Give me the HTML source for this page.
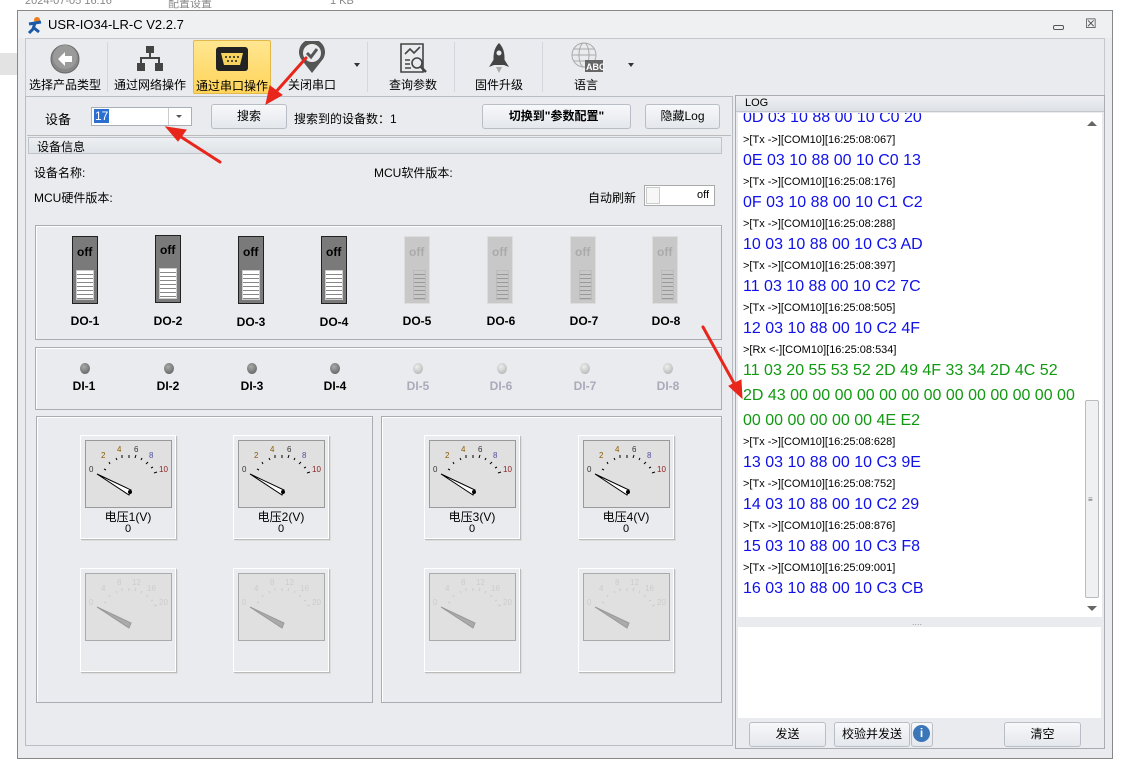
<!DOCTYPE html>
<html><head><meta charset="utf-8"><style>
*{margin:0;padding:0;box-sizing:border-box}
body{width:1121px;height:776px;background:#fff;position:relative;overflow:hidden;font-family:"Liberation Sans","Noto Sans CJK SC",sans-serif;font-size:12px;color:#000}
.a{position:absolute}
.btn{position:absolute;background:linear-gradient(#f7f8fa,#e4e7ec);border:1px solid #b9bec6;border-radius:3px;text-align:center;font-size:12px}
.tb{position:absolute;top:40px;height:54px;text-align:center;font-size:12px}
.tb span{position:absolute;left:0;right:0;top:36px}
.sep{position:absolute;top:42px;width:1px;height:50px;background:#d4d8de}
.sw{position:absolute;top:236px;width:26px;height:68px;background:#7a7a7a;border:1px solid #222}
.sw b{position:absolute;left:4px;top:8px;font-size:12px;font-weight:bold;color:#000;font-family:"Liberation Sans Narrow","Liberation Sans",sans-serif}
.sw i{position:absolute;left:3px;right:3px;top:33px;bottom:3px;background:repeating-linear-gradient(#fff 0 3px,#888 3px 4px);border:1px solid #ccc}
.sw.d{background:#c8c8c8;border-color:#ddd}
.sw.d b{color:#aaa}
.sw.d i{background:repeating-linear-gradient(#c8c8c8 0 3px,#999 3px 4px);border-color:#bbb;left:8px}
.lb{position:absolute;font-weight:bold;font-size:12px;width:40px;text-align:center;font-family:"Liberation Sans Narrow","Liberation Sans",sans-serif}
.led{position:absolute;top:363px;width:10px;height:11px;border-radius:50%;background:radial-gradient(circle at 40% 35%,#aaa,#555)}
.led.d{background:radial-gradient(circle at 40% 35%,#eee,#aaa)}
.card{position:absolute;width:96px;height:104px;background:#e9ebee;border:1px solid #fff;box-shadow:1px 1px 0 #bbb,2px 2px 0 #ddd}
.card svg{position:absolute;left:4px;top:4px}
.card .t{position:absolute;left:0;right:0;top:72px;text-align:center;font-size:12px}
.card .v{position:absolute;left:0;right:0;top:87px;text-align:center;font-size:11px}
.log div{position:absolute;left:5px;white-space:nowrap}
.s{font-size:11px;color:#000}
.bl{font-size:16px;color:#1010e8}
.gr{font-size:16px;color:#119911}
</style></head><body>
<div class="a" style="left:25px;top:-5px;color:#888;font-size:11px">2024-07-05 16:16</div>
<div class="a" style="left:168px;top:-5px;color:#888;font-size:11px">配置设置</div>
<div class="a" style="left:330px;top:-5px;color:#888;font-size:11px">1 KB</div>
<div class="a" style="left:0;top:53px;width:17px;height:22px;background:#e3e3e3"></div>

<div class="a" style="left:17px;top:10px;width:1096px;height:749px;background:#e9ebee;border:1px solid #888"></div>
<div class="a" style="left:18px;top:11px;width:1094px;height:27px;background:#eef0f2"></div>
<svg class="a" style="left:27px;top:16px" width="16" height="18"><circle cx="10" cy="4" r="3" fill="#f07d1a"/><path d="M2 8 L14 6 M8 7 L6 13 L2 17 M7 12 L12 16" stroke="#1c5aa8" stroke-width="3" fill="none"/></svg>
<div class="a" style="left:48px;top:17px;font-size:13px">USR-IO34-LR-C V2.2.7</div>
<div class="a" style="left:1053px;top:25px;width:11px;height:5px;border:1px solid #555;border-radius:2px"></div>
<div class="a" style="left:1085px;top:16px;font-size:13px;color:#444">☒</div>

<div class="a" style="left:25px;top:38px;width:1080px;height:58px;background:#e9ebee;border:1px solid #c4c8ce;border-bottom:none"></div>
<div class="tb" style="left:27px;width:76px"><svg width="32" height="32" style="margin-top:3px"><circle cx="16" cy="16" r="14" fill="#888" stroke="#666"/><circle cx="16" cy="14" r="12" fill="#9a9a9a"/><path d="M9 16 L16 9 L16 13 L23 13 L23 19 L16 19 L16 23 Z" fill="#fff"/></svg><span>选择产品类型</span></div>
<div class="sep" style="left:107px"></div>
<div class="tb" style="left:110px;width:80px"><svg width="32" height="32" style="margin-top:3px" fill="#444"><rect x="12" y="3" width="8" height="7"/><rect x="15" y="10" width="2" height="5"/><rect x="6" y="14" width="20" height="2"/><rect x="6" y="14" width="2" height="6"/><rect x="24" y="14" width="2" height="6"/><rect x="3" y="20" width="8" height="8"/><rect x="21" y="20" width="8" height="8"/></svg><span>通过网络操作</span></div>
<div class="tb" style="left:193px;width:78px;background:linear-gradient(#ffe690,#ffd45a);border:1px solid #e2b84a;border-radius:2px"><svg width="34" height="30" style="margin-top:4px"><rect x="1" y="2" width="32" height="24" rx="3" fill="#222"/><path d="M6 8 H28 L25 20 H9 Z" fill="#f6d35e"/><g fill="#222"><circle cx="11" cy="12" r="1"/><circle cx="15" cy="12" r="1"/><circle cx="19" cy="12" r="1"/><circle cx="23" cy="12" r="1"/><circle cx="13" cy="16" r="1"/><circle cx="17" cy="16" r="1"/><circle cx="21" cy="16" r="1"/></g></svg><span>通过串口操作</span></div>
<div class="tb" style="left:274px;width:76px"><svg width="32" height="34" style="margin-top:1px"><path d="M16 32 L5 18 A13 13 0 1 1 27 18 Z" fill="#555"/><circle cx="16" cy="12" r="9" fill="#e9ebee"/><path d="M11 12 L15 16 L21 8" stroke="#555" stroke-width="3" fill="none"/></svg><span>关闭串口</span></div>
<div class="a" style="left:354px;top:63px;border:3px solid transparent;border-top:4px solid #333"></div>
<div class="sep" style="left:367px"></div>
<div class="tb" style="left:375px;width:76px"><svg width="32" height="32" style="margin-top:2px" stroke="#444" fill="none" stroke-width="1.6"><path d="M4 2 H26 V30 H4 Z"/><path d="M8 12 L13 7 L17 11 L23 5"/><path d="M8 18 H13 M8 22 H13 M8 26 H14"/><circle cx="20" cy="21" r="5"/><path d="M24 25 L29 30" stroke-width="2.5"/></svg><span>查询参数</span></div>
<div class="sep" style="left:454px"></div>
<div class="tb" style="left:460px;width:78px"><svg width="32" height="34" style="margin-top:1px" fill="#444"><path d="M16 2 C22 8 22 16 21 24 H11 C10 16 10 8 16 2 Z"/><path d="M11 18 L6 26 L11 24 Z M21 18 L26 26 L21 24 Z"/><path d="M13 26 H19 L16 32 Z" fill="#aaa"/><circle cx="16" cy="12" r="2.5" fill="#e9ebee"/></svg><span>固件升级</span></div>
<div class="sep" style="left:542px"></div>
<div class="tb" style="left:548px;width:76px"><svg width="36" height="34" style="margin-top:1px" stroke="#aaa" fill="none"><circle cx="16" cy="14" r="12"/><ellipse cx="16" cy="14" rx="5" ry="12"/><path d="M4 14 H28 M6 8 H26 M6 20 H26"/><rect x="17" y="19" width="18" height="12" fill="#666" stroke="none"/><text x="18" y="29" font-size="9" fill="#fff" stroke="none" font-family="Liberation Sans" font-weight="bold">ABC</text></svg><span>语言</span></div>
<div class="a" style="left:628px;top:63px;border:3px solid transparent;border-top:4px solid #333"></div>

<div class="a" style="left:25px;top:96px;width:708px;height:650px;background:#e9ebee;border:1px solid #b8bcc3"></div>
<div class="a" style="left:45px;top:109px;font-size:13px">设备</div>
<div class="a" style="left:91px;top:107px;width:101px;height:19px;background:#fff;border:1px solid #aab0b8"></div>
<div class="a" style="left:94px;top:109px;background:#2b6fd0;color:#fff;font-size:12px;padding:0 1px;line-height:14px">17</div>
<div class="a" style="left:168px;top:108px;width:1px;height:17px;background:#ccc"></div>
<div class="a" style="left:176px;top:115px;border:3px solid transparent;border-top:3px solid #555"></div>
<div class="btn" style="left:211px;top:104px;width:76px;height:25px;line-height:23px">搜索</div>
<div class="a" style="left:294px;top:110px">搜索到的设备数：1</div>
<div class="btn" style="left:482px;top:104px;width:149px;height:25px;line-height:23px;font-weight:bold">切换到"参数配置"</div>
<div class="btn" style="left:645px;top:104px;width:75px;height:25px;line-height:23px">隐藏Log</div>
<div class="a" style="left:27px;top:135px;width:704px;height:1px;background:#bbb"></div>
<div class="a" style="left:28px;top:137px;width:694px;height:17px;background:linear-gradient(#eef0f3,#dfe2e6);border:1px solid #c0c4ca"></div>
<div class="a" style="left:37px;top:138px;font-size:12px">设备信息</div>
<div class="a" style="left:34px;top:164px">设备名称:</div>
<div class="a" style="left:374px;top:164px">MCU软件版本:</div>
<div class="a" style="left:34px;top:189px">MCU硬件版本:</div>
<div class="a" style="left:588px;top:189px">自动刷新</div>
<div class="a" style="left:644px;top:185px;width:71px;height:21px;background:#fff;border:1px solid #aaa"></div>
<div class="a" style="left:646px;top:187px;width:14px;height:17px;border:1px solid #ccc;background:#f7f7f7"></div>
<div class="a" style="left:697px;top:189px;font-size:11px">off</div>

<div class="a" style="left:35px;top:225px;width:687px;height:115px;border:1px solid #a9adb3;box-shadow:inset 1px 1px 0 #fff"></div>
<div class="sw" style="left:72px"><b>off</b><i></i></div>
<div class="sw" style="left:155px;top:235px"><b style="top:7px">off</b><i style="top:32px"></i></div>
<div class="sw" style="left:238px"><b>off</b><i></i></div>
<div class="sw" style="left:321px"><b>off</b><i></i></div>
<div class="sw d" style="left:404px"><b>off</b><i></i></div>
<div class="sw d" style="left:487px"><b>off</b><i></i></div>
<div class="sw d" style="left:570px"><b>off</b><i></i></div>
<div class="sw d" style="left:652px"><b>off</b><i></i></div>
<div class="lb" style="left:65px;top:314px">DO-1</div>
<div class="lb" style="left:148px;top:314px">DO-2</div>
<div class="lb" style="left:231px;top:315px">DO-3</div>
<div class="lb" style="left:314px;top:315px">DO-4</div>
<div class="lb" style="left:397px;top:314px">DO-5</div>
<div class="lb" style="left:481px;top:314px">DO-6</div>
<div class="lb" style="left:564px;top:314px">DO-7</div>
<div class="lb" style="left:646px;top:314px">DO-8</div>

<div class="a" style="left:35px;top:347px;width:687px;height:63px;border:1px solid #a9adb3;box-shadow:inset 1px 1px 0 #fff"></div>
<div class="led" style="left:80px"></div>
<div class="led" style="left:164px"></div><div class="led" style="left:247px"></div><div class="led" style="left:330px"></div>
<div class="led d" style="left:413px"></div><div class="led d" style="left:497px"></div><div class="led d" style="left:580px"></div><div class="led d" style="left:663px"></div>
<div class="lb" style="left:64px;top:379px">DI-1</div>
<div class="lb" style="left:148px;top:379px">DI-2</div>
<div class="lb" style="left:232px;top:379px">DI-3</div>
<div class="lb" style="left:315px;top:379px">DI-4</div>
<div class="lb" style="left:398px;top:379px;color:#aab">DI-5</div>
<div class="lb" style="left:481px;top:379px;color:#aab">DI-6</div>
<div class="lb" style="left:565px;top:379px;color:#aab">DI-7</div>
<div class="lb" style="left:648px;top:379px;color:#aab">DI-8</div>

<div class="a" style="left:36px;top:416px;width:337px;height:287px;border:1px solid #a9adb3;box-shadow:inset 1px 1px 0 #fff"></div>
<div class="a" style="left:381px;top:416px;width:341px;height:287px;border:1px solid #a9adb3;box-shadow:inset 1px 1px 0 #fff"></div>

<div class="card" style="left:80px;top:435px"><svg width="88" height="68"><rect x="0.5" y="0.5" width="86" height="67" fill="#e0e0e0" stroke="#999"/><g font-size="8" font-family="Liberation Sans"><text x="4" y="32" fill="#333">0</text><text x="16" y="18" fill="#8a5a00">2</text><text x="32" y="12" fill="#8a5a00">4</text><text x="49" y="12" fill="#333">6</text><text x="64" y="18" fill="#5050a0">8</text><text x="74" y="32" fill="#8a2020">10</text></g><path d="M19 29 l2 1 M24 22 l1 2 M31 18 l1 2 M37 15 l0 3 M44 15 l0 3 M51 15 l-1 3 M57 18 l-1 2 M63 22 l-2 2 M68 27 l-2 1 M72 32 l-3 1" stroke="#000"/><path d="M12 34 L46 50 L44 55 Z" fill="#fff" stroke="#000"/><circle cx="45" cy="52" r="2" fill="#000"/></svg><div class="t">电压1(V)</div><div class="v">0</div></div>
<div class="card" style="left:233px;top:435px"><svg width="88" height="68"><rect x="0.5" y="0.5" width="86" height="67" fill="#e0e0e0" stroke="#999"/><g font-size="8" font-family="Liberation Sans"><text x="4" y="32" fill="#333">0</text><text x="16" y="18" fill="#8a5a00">2</text><text x="32" y="12" fill="#8a5a00">4</text><text x="49" y="12" fill="#333">6</text><text x="64" y="18" fill="#5050a0">8</text><text x="74" y="32" fill="#8a2020">10</text></g><path d="M19 29 l2 1 M24 22 l1 2 M31 18 l1 2 M37 15 l0 3 M44 15 l0 3 M51 15 l-1 3 M57 18 l-1 2 M63 22 l-2 2 M68 27 l-2 1 M72 32 l-3 1" stroke="#000"/><path d="M12 34 L46 50 L44 55 Z" fill="#fff" stroke="#000"/><circle cx="45" cy="52" r="2" fill="#000"/></svg><div class="t">电压2(V)</div><div class="v">0</div></div>
<div class="card" style="left:424px;top:435px"><svg width="88" height="68"><rect x="0.5" y="0.5" width="86" height="67" fill="#e0e0e0" stroke="#999"/><g font-size="8" font-family="Liberation Sans"><text x="4" y="32" fill="#333">0</text><text x="16" y="18" fill="#8a5a00">2</text><text x="32" y="12" fill="#8a5a00">4</text><text x="49" y="12" fill="#333">6</text><text x="64" y="18" fill="#5050a0">8</text><text x="74" y="32" fill="#8a2020">10</text></g><path d="M19 29 l2 1 M24 22 l1 2 M31 18 l1 2 M37 15 l0 3 M44 15 l0 3 M51 15 l-1 3 M57 18 l-1 2 M63 22 l-2 2 M68 27 l-2 1 M72 32 l-3 1" stroke="#000"/><path d="M12 34 L46 50 L44 55 Z" fill="#fff" stroke="#000"/><circle cx="45" cy="52" r="2" fill="#000"/></svg><div class="t">电压3(V)</div><div class="v">0</div></div>
<div class="card" style="left:578px;top:435px"><svg width="88" height="68"><rect x="0.5" y="0.5" width="86" height="67" fill="#e0e0e0" stroke="#999"/><g font-size="8" font-family="Liberation Sans"><text x="4" y="32" fill="#333">0</text><text x="16" y="18" fill="#8a5a00">2</text><text x="32" y="12" fill="#8a5a00">4</text><text x="49" y="12" fill="#333">6</text><text x="64" y="18" fill="#5050a0">8</text><text x="74" y="32" fill="#8a2020">10</text></g><path d="M19 29 l2 1 M24 22 l1 2 M31 18 l1 2 M37 15 l0 3 M44 15 l0 3 M51 15 l-1 3 M57 18 l-1 2 M63 22 l-2 2 M68 27 l-2 1 M72 32 l-3 1" stroke="#000"/><path d="M12 34 L46 50 L44 55 Z" fill="#fff" stroke="#000"/><circle cx="45" cy="52" r="2" fill="#000"/></svg><div class="t">电压4(V)</div><div class="v">0</div></div>

<div class="card" style="left:80px;top:568px"><svg width="88" height="68"><rect x="0.5" y="0.5" width="86" height="67" fill="#e0e0e0" stroke="#aaa"/><g font-size="8" font-family="Liberation Sans" fill="#ccc"><text x="4" y="32">0</text><text x="16" y="18">4</text><text x="32" y="12">8</text><text x="47" y="12">12</text><text x="62" y="18">16</text><text x="74" y="32">20</text></g><path d="M19 29 l2 1 M24 22 l1 2 M31 18 l1 2 M37 15 l0 3 M44 15 l0 3 M51 15 l-1 3 M57 18 l-1 2 M63 22 l-2 2 M68 27 l-2 1 M72 32 l-3 1" stroke="#ccc"/><path d="M12 34 L46 50 L44 55 Z" fill="#aaa" stroke="#999"/></svg></div>
<div class="card" style="left:233px;top:568px"><svg width="88" height="68"><rect x="0.5" y="0.5" width="86" height="67" fill="#e0e0e0" stroke="#aaa"/><g font-size="8" font-family="Liberation Sans" fill="#ccc"><text x="4" y="32">0</text><text x="16" y="18">4</text><text x="32" y="12">8</text><text x="47" y="12">12</text><text x="62" y="18">16</text><text x="74" y="32">20</text></g><path d="M19 29 l2 1 M24 22 l1 2 M31 18 l1 2 M37 15 l0 3 M44 15 l0 3 M51 15 l-1 3 M57 18 l-1 2 M63 22 l-2 2 M68 27 l-2 1 M72 32 l-3 1" stroke="#ccc"/><path d="M12 34 L46 50 L44 55 Z" fill="#aaa" stroke="#999"/></svg></div>
<div class="card" style="left:424px;top:568px"><svg width="88" height="68"><rect x="0.5" y="0.5" width="86" height="67" fill="#e0e0e0" stroke="#aaa"/><g font-size="8" font-family="Liberation Sans" fill="#ccc"><text x="4" y="32">0</text><text x="16" y="18">4</text><text x="32" y="12">8</text><text x="47" y="12">12</text><text x="62" y="18">16</text><text x="74" y="32">20</text></g><path d="M19 29 l2 1 M24 22 l1 2 M31 18 l1 2 M37 15 l0 3 M44 15 l0 3 M51 15 l-1 3 M57 18 l-1 2 M63 22 l-2 2 M68 27 l-2 1 M72 32 l-3 1" stroke="#ccc"/><path d="M12 34 L46 50 L44 55 Z" fill="#aaa" stroke="#999"/></svg></div>
<div class="card" style="left:578px;top:568px"><svg width="88" height="68"><rect x="0.5" y="0.5" width="86" height="67" fill="#e0e0e0" stroke="#aaa"/><g font-size="8" font-family="Liberation Sans" fill="#ccc"><text x="4" y="32">0</text><text x="16" y="18">4</text><text x="32" y="12">8</text><text x="47" y="12">12</text><text x="62" y="18">16</text><text x="74" y="32">20</text></g><path d="M19 29 l2 1 M24 22 l1 2 M31 18 l1 2 M37 15 l0 3 M44 15 l0 3 M51 15 l-1 3 M57 18 l-1 2 M63 22 l-2 2 M68 27 l-2 1 M72 32 l-3 1" stroke="#ccc"/><path d="M12 34 L46 50 L44 55 Z" fill="#aaa" stroke="#999"/></svg></div>

<div class="a" style="left:735px;top:95px;width:370px;height:654px;background:#e9ebee;border:1px solid #a9adb3"></div>
<div class="a" style="left:736px;top:96px;width:368px;height:16px;background:linear-gradient(#eef0f3,#dde0e5);border-bottom:1px solid #c4c8ce"></div>
<div class="a" style="left:745px;top:97px;font-size:11px">LOG</div>
<div class="a log" style="left:738px;top:113px;width:345px;height:504px;background:#fff;overflow:hidden">
<div class="bl" style="top:-4px">0D 03 10 88 00 10 C0 20</div>
<div class="s" style="top:21px">&gt;[Tx -&gt;][COM10][16:25:08:067]</div>
<div class="bl" style="top:39px">0E 03 10 88 00 10 C0 13</div>
<div class="s" style="top:63px">&gt;[Tx -&gt;][COM10][16:25:08:176]</div>
<div class="bl" style="top:81px">0F 03 10 88 00 10 C1 C2</div>
<div class="s" style="top:105px">&gt;[Tx -&gt;][COM10][16:25:08:288]</div>
<div class="bl" style="top:123px">10 03 10 88 00 10 C3 AD</div>
<div class="s" style="top:147px">&gt;[Tx -&gt;][COM10][16:25:08:397]</div>
<div class="bl" style="top:165px">11 03 10 88 00 10 C2 7C</div>
<div class="s" style="top:189px">&gt;[Tx -&gt;][COM10][16:25:08:505]</div>
<div class="bl" style="top:207px">12 03 10 88 00 10 C2 4F</div>
<div class="s" style="top:231px">&gt;[Rx &lt;-][COM10][16:25:08:534]</div>
<div class="gr" style="top:249px">11 03 20 55 53 52 2D 49 4F 33 34 2D 4C 52</div>
<div class="gr" style="top:274px">2D 43 00 00 00 00 00 00 00 00 00 00 00 00 00</div>
<div class="gr" style="top:299px">00 00 00 00 00 00 4E E2</div>
<div class="s" style="top:323px">&gt;[Tx -&gt;][COM10][16:25:08:628]</div>
<div class="bl" style="top:341px">13 03 10 88 00 10 C3 9E</div>
<div class="s" style="top:365px">&gt;[Tx -&gt;][COM10][16:25:08:752]</div>
<div class="bl" style="top:383px">14 03 10 88 00 10 C2 29</div>
<div class="s" style="top:407px">&gt;[Tx -&gt;][COM10][16:25:08:876]</div>
<div class="bl" style="top:425px">15 03 10 88 00 10 C3 F8</div>
<div class="s" style="top:449px">&gt;[Tx -&gt;][COM10][16:25:09:001]</div>
<div class="bl" style="top:467px">16 03 10 88 00 10 C3 CB</div>
</div>
<div class="a" style="left:1083px;top:113px;width:19px;height:504px;background:#fff"></div>
<div class="a" style="left:1087px;top:121px;border:5px solid transparent;border-bottom:5px solid #666;border-top:none"></div>
<div class="a" style="left:1085px;top:400px;width:14px;height:198px;background:#eef0f2;border:1px solid #bbb;border-radius:2px"></div>
<div class="a" style="left:1088px;top:495px;font-size:8px;color:#666">≡</div>
<div class="a" style="left:1087px;top:606px;border:5px solid transparent;border-top:5px solid #666;border-bottom:none"></div>
<div class="a" style="left:912px;top:617px;font-size:9px;color:#999">....</div>
<div class="a" style="left:738px;top:627px;width:363px;height:91px;background:#fff"></div>
<div class="btn" style="left:749px;top:722px;width:77px;height:25px;line-height:23px">发送</div>
<div class="btn" style="left:834px;top:722px;width:76px;height:25px;line-height:23px">校验并发送</div>
<div class="btn" style="left:911px;top:722px;width:22px;height:25px"></div>
<div class="a" style="left:913px;top:725px;width:17px;height:17px;border-radius:50%;background:#3a76b8;color:#fff;font-weight:bold;font-size:12px;text-align:center;line-height:17px">i</div>
<div class="btn" style="left:1004px;top:722px;width:77px;height:25px;line-height:23px">清空</div>

<svg class="a" style="left:0;top:0" width="1121" height="776"><g fill="#e8261b" stroke="#e8261b" stroke-linecap="round">
<path d="M220 162 L178 135" stroke-width="3"/><path d="M166 127 L186 130 L178 141 Z"/>
<path d="M306 58 L274 94" stroke-width="3"/><path d="M266 104 L270 86 L282 95 Z"/>
<path d="M703 327 L735 385" stroke-width="3"/><path d="M742 398 L729 386 L741 380 Z"/>
</g></svg>
</body></html>
